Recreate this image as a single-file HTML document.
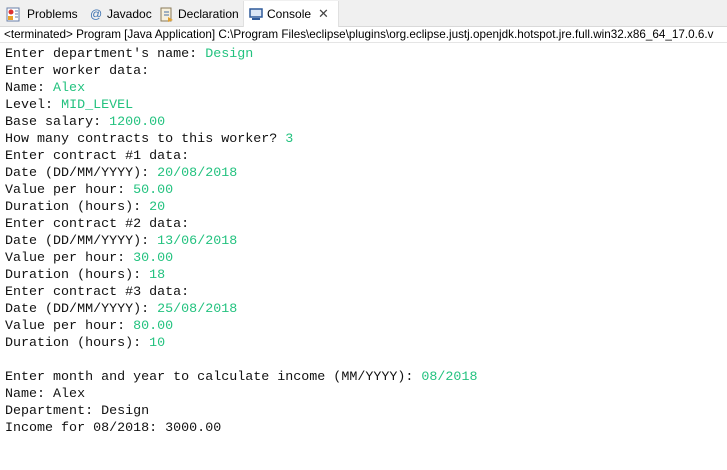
<!DOCTYPE html>
<html><head><style>
body{margin:0;width:727px;height:470px;background:#fff;overflow:hidden;position:relative;font-family:"Liberation Sans",sans-serif}
.bar{position:absolute;left:0;top:0;width:727px;height:26px;background:#f0f0f0;border-bottom:1px solid #d9d9d9}
.tab{position:absolute;top:7px;font-size:12px;color:#000;white-space:nowrap}
.ctab{position:absolute;left:243px;top:1px;width:94px;height:26px;background:#fff;border-left:1px solid #e0e0e0;border-right:1px solid #e0e0e0}
.status{position:absolute;left:4px;top:28px;font-size:11.7px;white-space:nowrap;color:#000}
.sep{position:absolute;left:0;top:42px;width:727px;height:1px;background:#e5e5e5}
pre{position:absolute;left:5px;top:46px;margin:0;font-family:"Liberation Mono",monospace;font-size:13.35px;line-height:17px;color:#111}
.g{color:#23c27f}
</style></head><body>
<div class="bar"></div>
<div class="ctab"></div>
<svg style="position:absolute;left:6px;top:7px" width="15" height="15"><rect x="1" y="1" width="12" height="13" fill="#fff" stroke="#6a7fa8"/><circle cx="5" cy="5" r="2.5" fill="#d33"/><rect x="2" y="9" width="5" height="4" fill="#e9a22d"/><path d="M9 4h3M9 7h3M9 10h3" stroke="#6a7fa8"/></svg>
<div class="tab" style="left:27px">Problems</div>
<div class="tab" style="left:90px;color:#3a70b0">@</div>
<div class="tab" style="left:107px">Javadoc</div>
<svg style="position:absolute;left:160px;top:7px" width="15" height="16"><rect x="1" y="1" width="10" height="13" fill="#f7f0dc" stroke="#8a7a5a"/><path d="M4 5h5M4 8h5" stroke="#4a6fa5"/><path d="M8 10l5 3-5 2z" fill="#e0a030"/></svg>
<div class="tab" style="left:178px">Declaration</div>
<svg style="position:absolute;left:249px;top:8px" width="14" height="13"><rect x="1" y="1" width="12" height="8" fill="#dbe6f5" stroke="#2f5a9a" stroke-width="1.5"/><rect x="3" y="10" width="8" height="2" fill="#2f5a9a"/></svg>
<div class="tab" style="left:267px">Console</div>
<div class="tab" style="left:318px;font-size:13px;top:6px;color:#444">✕</div>
<div class="status">&lt;terminated&gt; Program [Java Application] C:\Program Files\eclipse\plugins\org.eclipse.justj.openjdk.hotspot.jre.full.win32.x86_64_17.0.6.v</div>
<div class="sep"></div>
<pre>Enter department's name: <span class="g">Design</span>
Enter worker data:
Name: <span class="g">Alex</span>
Level: <span class="g">MID_LEVEL</span>
Base salary: <span class="g">1200.00</span>
How many contracts to this worker? <span class="g">3</span>
Enter contract #1 data:
Date (DD/MM/YYYY): <span class="g">20/08/2018</span>
Value per hour: <span class="g">50.00</span>
Duration (hours): <span class="g">20</span>
Enter contract #2 data:
Date (DD/MM/YYYY): <span class="g">13/06/2018</span>
Value per hour: <span class="g">30.00</span>
Duration (hours): <span class="g">18</span>
Enter contract #3 data:
Date (DD/MM/YYYY): <span class="g">25/08/2018</span>
Value per hour: <span class="g">80.00</span>
Duration (hours): <span class="g">10</span>

Enter month and year to calculate income (MM/YYYY): <span class="g">08/2018</span>
Name: Alex
Department: Design
Income for 08/2018: 3000.00</pre>
</body></html>
